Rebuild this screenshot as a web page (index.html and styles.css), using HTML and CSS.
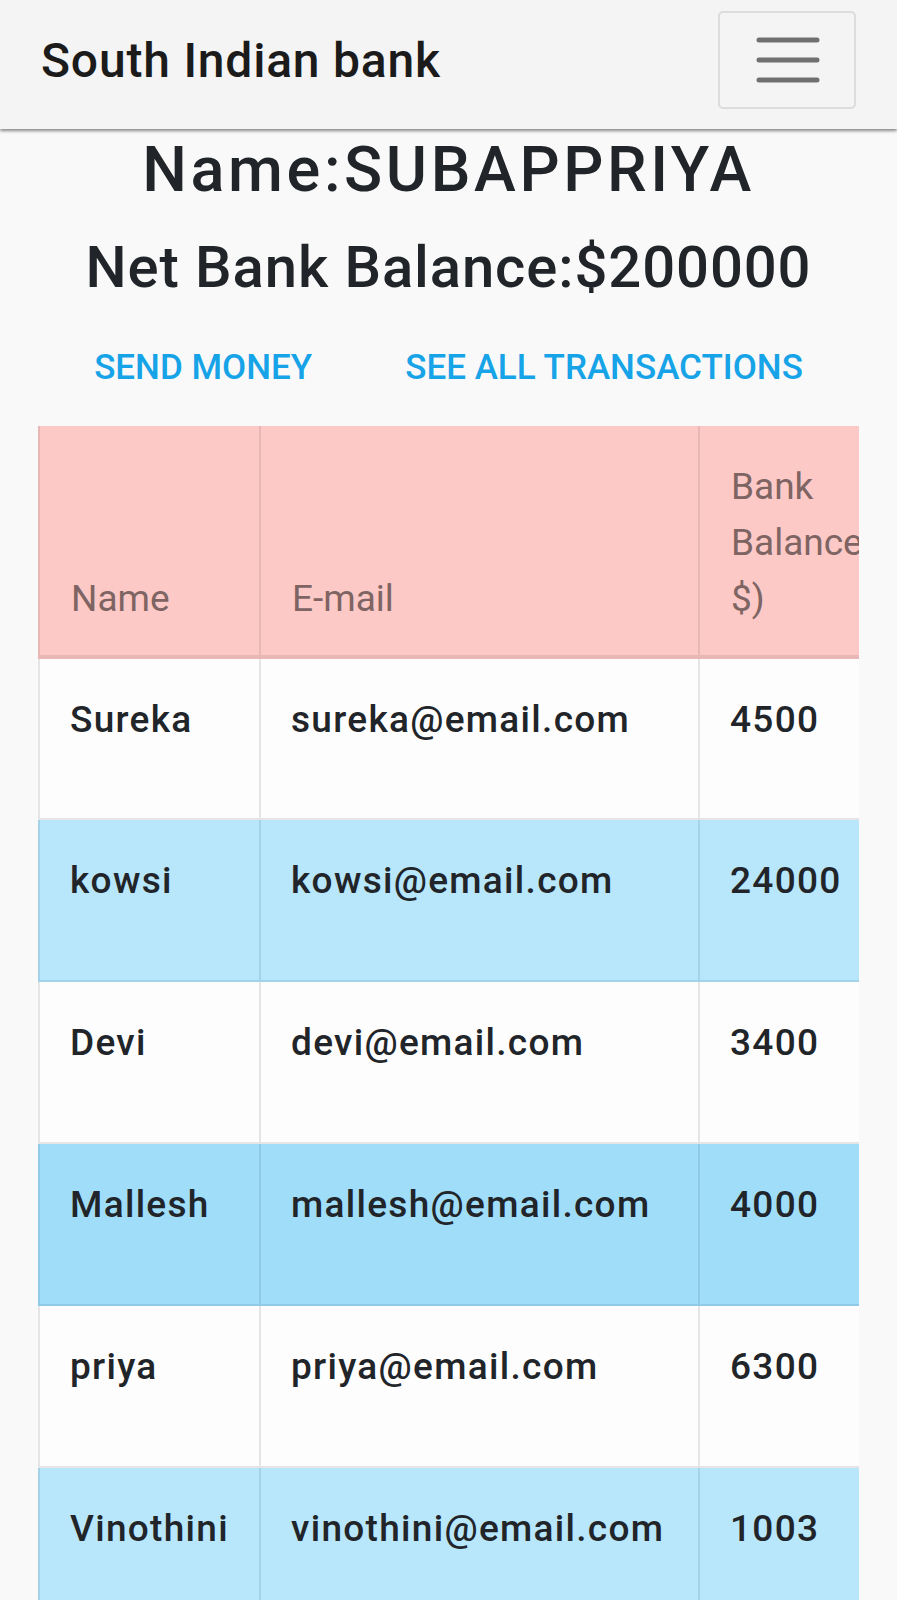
FILE: index.html
```html
<!DOCTYPE html>
<html lang="en">
<head>
<meta charset="utf-8">
<title>South Indian bank</title>
<link rel="stylesheet" href="styles.css">
</head>
<body>
<nav class="navbar">
  <span class="brand">South Indian bank</span>
  <button class="toggler" type="button" aria-label="Toggle navigation">
    <svg class="toggler-icon" width="64" height="50" viewBox="0 0 64 50">
      <path d="M3 5H61M3 25H61M3 45H61" stroke="#707070" stroke-width="5" stroke-linecap="round" fill="none"/>
    </svg>
  </button>
</nav>
<main class="content">
  <h3 class="title-name">Name:SUBAPPRIYA</h3>
  <h4 class="title-balance">Net Bank Balance:$200000</h4>
  <div class="actions">
    <a class="action-link" href="#">SEND MONEY</a>
    <a class="action-link" href="#">SEE ALL TRANSACTIONS</a>
  </div>
  <div class="table-wrap">
    <table class="accounts">
      <colgroup>
        <col class="col-name">
        <col class="col-email">
        <col class="col-balance">
      </colgroup>
      <thead>
        <tr>
          <th>Name</th>
          <th>E-mail</th>
          <th>Bank Balance(in $)</th>
        </tr>
      </thead>
      <tbody>
        <tr class="row-plain"><td>Sureka</td><td>sureka@email.com</td><td>4500</td></tr>
        <tr class="row-info"><td>kowsi</td><td>kowsi@email.com</td><td>24000</td></tr>
        <tr class="row-plain"><td>Devi</td><td>devi@email.com</td><td>3400</td></tr>
        <tr class="row-strong"><td>Mallesh</td><td>mallesh@email.com</td><td>4000</td></tr>
        <tr class="row-plain"><td>priya</td><td>priya@email.com</td><td>6300</td></tr>
        <tr class="row-info"><td>Vinothini</td><td>vinothini@email.com</td><td>1003</td></tr>
      </tbody>
    </table>
  </div>
</main>
</body>
</html>
```
FILE: styles.css
```css
* { box-sizing: border-box; }

html, body {
  margin: 0;
  padding: 0;
}

body {
  background: #f9f9f9;
  font-family: Roboto, "Liberation Sans", Arial, sans-serif;
  color: #212529;
}

.navbar {
  height: 129px;
  background: #f4f4f4;
  display: flex;
  align-items: flex-start;
  justify-content: space-between;
  padding: 11px 41px 0 41px;
  box-shadow: 0 2px 3px rgba(0, 0, 0, 0.45);
  position: relative;
  z-index: 2;
}

.brand {
  font-size: 48px;
  font-weight: 500;
  letter-spacing: 0.8px;
  color: #1b1b1b;
  line-height: 48px;
  margin-top: 26px;
}

.toggler {
  width: 138px;
  height: 98px;
  border: 2px solid #dcdcdc;
  border-radius: 5px;
  background: transparent;
  display: flex;
  align-items: center;
  justify-content: center;
  padding: 0;
}

.toggler-icon {
  display: block;
  margin-left: 1px;
}

.content {
  display: flex;
  flex-direction: column;
  align-items: center;
}

.title-name {
  margin: 3px 0 0 0;
  font-size: 63px;
  line-height: 76px;
  font-weight: 500;
  letter-spacing: 3.6px;
  color: #212529;
}

.title-balance {
  margin: 24px 0 0 0;
  font-size: 58px;
  line-height: 70px;
  font-weight: 500;
  letter-spacing: 0.9px;
  color: #212529;
}

.actions {
  display: flex;
  justify-content: center;
  gap: 93px;
  margin-top: 40px;
}

.action-link {
  font-size: 35px;
  line-height: 52px;
  font-weight: 500;
  color: #17a3e7;
  text-decoration: none;
}

.table-wrap {
  align-self: flex-start;
  margin: 32px 0 0 38px;
  width: 821px;
  overflow: hidden;
}

.accounts {
  border-collapse: collapse;
  table-layout: fixed;
  width: 920px;
  font-size: 37px;
  line-height: 56px;
}

.col-name { width: 221px; }
.col-email { width: 439px; }
.col-balance { width: 260px; }

.accounts th {
  background: #fcc9c6;
  color: #7e6462;
  font-weight: 400;
  text-align: left;
  vertical-align: bottom;
  padding: 26px 30px 28px 31px;
  height: 231px;
  border: 2px solid #e9b8b6;
  border-bottom-width: 4px;
  border-top: none;
}

.accounts td {
  vertical-align: top;
  font-weight: 500;
  letter-spacing: 1.3px;
  padding: 33px 10px 0 30px;
  height: 162px;
  white-space: nowrap;
  border: 2px solid #e5e5e5;
  border-top: none;
}

.row-plain td {
  background: #fdfdfd;
}

.row-info td {
  background: #b8e6fa;
  border-color: #a3d3e8;
}

.row-strong td {
  background: #a0ddf9;
  border-color: #8fcbe6;
}
```
